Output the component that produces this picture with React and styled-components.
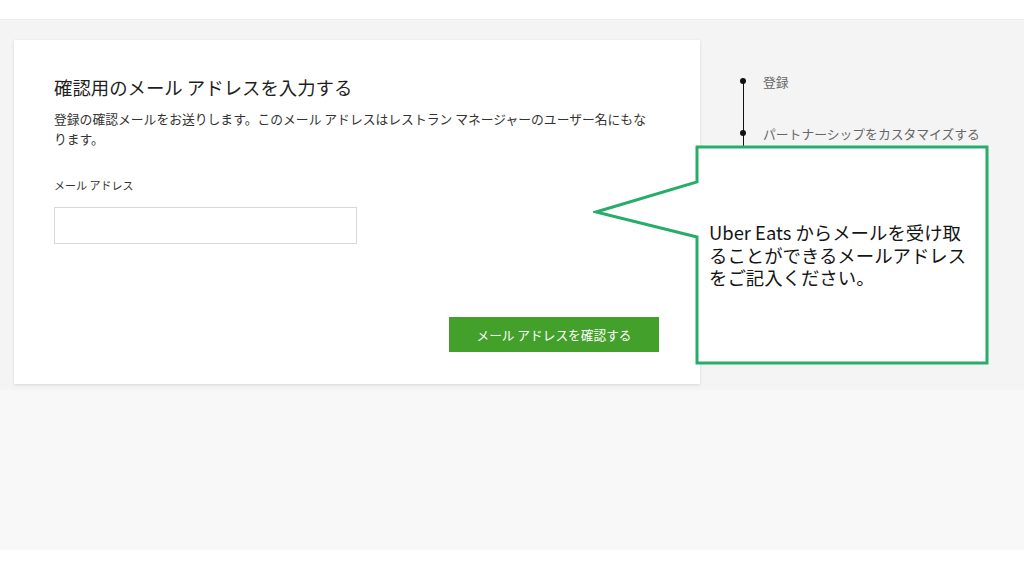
import styled, { createGlobalStyle } from 'styled-components'

const GlobalStyle = createGlobalStyle`
  html, body {
    margin: 0;
    padding: 0;
    background: #fff;
  }
  body {
    font-family: "Noto Sans CJK JP", "Noto Sans", sans-serif;
    color: #222;
  }
`

const Page = styled.div`
  position: relative;
  width: 1024px;
  height: 576px;
  display: flex;
  flex-direction: column;
  overflow: hidden;
`
const TopBar = styled.div`
  height: 19px;
  background: #fff;
  border-bottom: 1px solid #ebebeb;
`
const Main = styled.div`
  background: #f4f4f4;
  padding: 20px 0 6px 14px;
  display: flex;
  gap: 41px;
`
const Lower = styled.div`
  height: 160px;
  background: #f8f8f9;
`

const Card = styled.div`
  width: 686px;
  height: 344px;
  box-sizing: border-box;
  background: #fff;
  box-shadow: 0 1px 3px rgba(0, 0, 0, 0.12);
  padding: 35px 41px 32px 40px;
  display: flex;
  flex-direction: column;
`
const Title = styled.h2`
  margin: 0;
  font-size: 18.4px;
  line-height: 24px;
  font-weight: 400;
  color: #1f1f1f;
`
const Desc = styled.p`
  margin: 10px 0 0;
  font-size: 12.8px;
  line-height: 20px;
  color: #333;
`
const Label = styled.label`
  margin-top: 28px;
  font-size: 11px;
  line-height: 16px;
  color: #333;
`
const Input = styled.input`
  margin-top: 14px;
  width: 303px;
  height: 37px;
  box-sizing: border-box;
  border: 1px solid #d8d8d8;
  background: #fff;
  outline: none;
`
const Actions = styled.div`
  margin-top: auto;
  display: flex;
  justify-content: flex-end;
`
const Button = styled.button`
  width: 210px;
  height: 35px;
  border: none;
  background: #43a02b;
  color: #fff;
  font-family: inherit;
  font-size: 12.7px;
  cursor: pointer;
`

const Steps = styled.ul`
  list-style: none;
  margin: 0;
  padding: 33px 0 0;
  display: flex;
  flex-direction: column;
  gap: 36px;
`
const Step = styled.li`
  position: relative;
  display: flex;
  align-items: center;
  height: 16px;
  padding-left: 22px;
  font-size: 12.8px;
  color: #666;
  white-space: nowrap;

  &::before {
    content: '';
    position: absolute;
    left: -1px;
    top: 5px;
    width: 6px;
    height: 6px;
    border-radius: 50%;
    background: #111;
  }
  &::after {
    content: '';
    position: absolute;
    left: 1.5px;
    top: 8px;
    width: 1.5px;
    height: 52px;
    background: #111;
  }
`

const Callout = styled.div`
  position: absolute;
  left: 593px;
  top: 145px;
  width: 397px;
  height: 221px;
`
const CalloutText = styled.p`
  position: absolute;
  left: 116px;
  top: 76px;
  margin: 0;
  font-size: 18.4px;
  line-height: 22.5px;
  color: #151515;
  white-space: nowrap;
`

function App() {
  return (
    <Page>
      <GlobalStyle />
      <TopBar />
      <Main>
        <Card>
          <Title>確認用のメール アドレスを入力する</Title>
          <Desc>
            登録の確認メールをお送りします。このメール アドレスはレストラン マネージャーのユーザー名にもな
            <br />
            ります。
          </Desc>
          <Label htmlFor="email">メール アドレス</Label>
          <Input id="email" type="email" />
          <Actions>
            <Button>メール アドレスを確認する</Button>
          </Actions>
        </Card>
        <Steps>
          <Step>登録</Step>
          <Step>パートナーシップをカスタマイズする</Step>
        </Steps>
      </Main>
      <Lower />

      <Callout>
        <svg width="397" height="221" viewBox="0 0 397 221">
          <path
            d="M104 2 H394 V218 H104 V92 L3 67 L104 37 Z"
            fill="#fff"
            stroke="#27ad6a"
            strokeWidth="3"
            strokeLinejoin="miter"
          />
        </svg>
        <CalloutText>
          Uber Eats からメールを受け取
          <br />
          ることができるメールアドレス
          <br />
          をご記入ください。
        </CalloutText>
      </Callout>
    </Page>
  )
}

export default App
